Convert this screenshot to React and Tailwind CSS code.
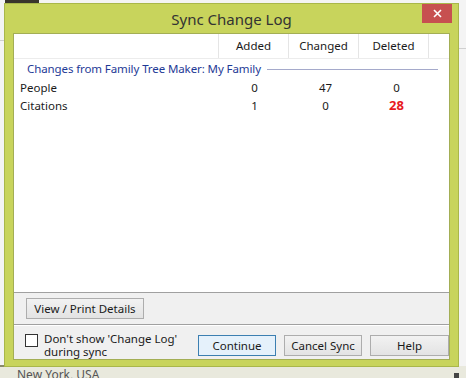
const FONT = { fontFamily: '"Segoe UI", "Noto Sans", "Open Sans", sans-serif' };

const ROWS = [
  { label: "People", added: "0", changed: "47", deleted: "0" },
  { label: "Citations", added: "1", changed: "0", deleted: "28", alert: true },
];

function Btn({ children, className = "", focused }) {
  return (
    <button
      className={`h-[21px] text-[11.5px] text-[#1a1a1a] border ${
        focused ? "border-[#3c7fb1] bg-[#e5f1fb]" : "border-[#adadad] bg-gradient-to-b from-[#f2f2f2] to-[#e3e3e3]"
      } ${className}`}
    >
      {children}
    </button>
  );
}

function Dialog() {
  return (
    <div className="absolute left-[4px] top-[3px] w-[455px] h-[364px] bg-[#c8d45c] border border-[#a9b74a] flex flex-col">
      {/* title bar */}
      <div className="relative h-[29px] flex items-center justify-center">
        <span className="text-[15px] text-[#333] mt-[1px]">Sync Change Log</span>
        <div className="absolute right-[6px] top-0 w-[30px] h-[19px] bg-[#c75050] flex items-center justify-center">
          <svg width="9" height="9" viewBox="0 0 9 9">
            <path d="M1 1 L8 8 M8 1 L1 8" stroke="#fff" strokeWidth="1.6" />
          </svg>
        </div>
      </div>

      {/* client area */}
      <div className="mx-[8px] h-[327px] border border-[#a3ae55] bg-[#f0f0f0] flex flex-col">
        {/* list */}
        <div className="h-[259px] bg-white border-b border-[#a0a0a0] flex flex-col text-[11.5px]">
          <div className="h-[25px] flex border-b border-[#ececec] text-[#1a1a1a]">
            <div className="w-[205px] border-r border-[#e5e5e5]" />
            <div className="w-[70px] border-r border-[#e5e5e5] flex items-center justify-center">Added</div>
            <div className="w-[70px] border-r border-[#e5e5e5] flex items-center justify-center">Changed</div>
            <div className="w-[70px] border-r border-[#e5e5e5] flex items-center justify-center">Deleted</div>
            <div className="flex-1" />
          </div>
          <div className="flex items-center h-[20px] pl-[13px] pr-[11px]">
            <span className="text-[#1e3a96] tracking-[-0.1px]">Changes from Family Tree Maker: My Family</span>
            <div className="flex-1 h-px bg-[#a5aacb] ml-[6px]" />
          </div>
          {ROWS.map((r) => (
            <div key={r.label} className="flex items-center h-[18px] text-[#1a1a1a]">
              <div className="w-[205px] pl-[6px]">{r.label}</div>
              <div className="w-[71px] text-center">{r.added}</div>
              <div className="w-[71px] text-center">{r.changed}</div>
              <div className={`w-[71px] text-center ${r.alert ? "text-[#e8191e] font-bold text-[13px]" : ""}`}>{r.deleted}</div>
            </div>
          ))}
        </div>

        {/* details button */}
        <div className="h-[32px] flex items-center pl-[12px] border-b border-[#a0a0a0]">
          <Btn className="w-[118px]">View / Print Details</Btn>
        </div>

        {/* footer */}
        <div className="flex-1 border-t border-white flex items-start pt-[7px] pl-[11px]">
          <div className="w-[13px] h-[13px] border border-[#333] bg-white mt-[1px] shrink-0" />
          <p className="ml-[6px] text-[11.5px] leading-[13px] text-[#1a1a1a] w-[140px] -mt-[1px]">
            Don't show 'Change Log' during sync
          </p>
          <div className="flex ml-[14px] mt-[2px]">
            <Btn focused className="w-[78px]">Continue</Btn>
            <Btn className="w-[78px] ml-[8px]">Cancel Sync</Btn>
            <Btn className="w-[79px] ml-[8px]">Help</Btn>
          </div>
        </div>
      </div>
    </div>
  );
}

export default function App() {
  return (
    <div className="relative w-[466px] h-[378px] overflow-hidden bg-[#f4f4f4]" style={FONT}>
      {/* desktop behind the dialog */}
      <div className="absolute left-[5px] top-0 w-[34px] h-[4px] bg-[#3a352c]" />
      <div className="absolute left-[0px] top-[40px] w-[4px] h-px bg-[#cfcfcf]" />
      <div className="absolute right-0 top-[48px] w-[7px] h-px bg-[#d0d0d0]" />
      <div className="absolute left-0 bottom-0 w-full h-[12px] bg-[#e9e9dd]" />
      <div className="absolute left-0 bottom-[11px] w-[6px] h-[2px] bg-[#8a8a6a]" />
      <div className="absolute left-[17px] bottom-[-4px] text-[12px] leading-[14px] text-[#555]">New York, USA</div>
      <div className="absolute right-[7px] bottom-0 w-[5px] h-[5px] bg-[#444]" />
      <Dialog />
    </div>
  );
}
